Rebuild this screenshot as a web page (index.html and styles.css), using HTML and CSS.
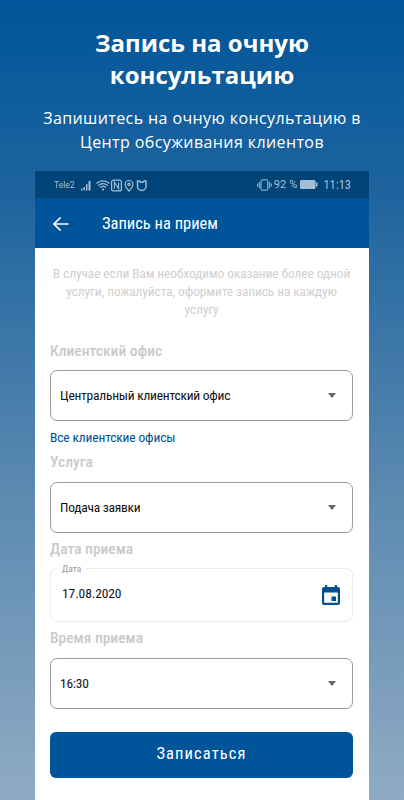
FILE: index.html
```html
<!DOCTYPE html>
<html lang="ru">
<head>
<meta charset="utf-8">
<title>Запись на очную консультацию</title>
<link rel="stylesheet" href="styles.css">
</head>
<body>
<main class="screen">
  <header class="promo">
    <h1 class="promo-title">Запись на очную<br>консультацию</h1>
    <p class="promo-sub">Запишитесь на очную консультацию в<br>Центр обсуживания клиентов</p>
  </header>
  <section class="phone">
    <div class="status">
      <span class="carrier">Tele2</span>
      <svg class="st-icon" width="66" height="14" viewBox="0 0 66 14" fill="none">
        <g fill="#a3bfd8">
          <rect x="0" y="10.500" width="1.500" height="2"/><rect x="2.500" y="9" width="1.500" height="3.500"/><rect x="5" y="6" width="1.500" height="6.500"/><rect x="7.500" y="3" width="2" height="9.500"/>
          <circle cx="22" cy="11.500" r="1.100"/>
        </g>
        <g stroke="#a3bfd8" stroke-width="1.200">
          <path d="M15.500 5.500a9.500 9.500 0 0 1 13 0M17.300 7.600a6.800 6.800 0 0 1 9.400 0M19.100 9.600a4 4 0 0 1 5.800 0"/>
          <rect x="30.600" y="2.100" width="9.800" height="10.800" rx="2"/>
          <path d="M33.400 10.800V4.200l4.200 6.600V4.200" stroke-width="1.100"/>
          <path d="M48 13c-2.600-2.900-3.900-4.800-3.900-6.600a3.900 3.900 0 0 1 7.800 0c0 1.800-1.300 3.700-3.900 6.600z"/>
          <circle cx="48" cy="6.400" r="1.200"/>
          <path d="M56.500 3h2l1 1.200h2.500l1-1.200h2v5.200a4.200 4.200 0 0 1-8.500 0z" stroke-width="1.400"/>
        </g>
      </svg>
      <span class="st-spacer"></span>
      <svg class="st-vibrate" width="15" height="12" viewBox="0 0 15 12" fill="none" stroke="#a3bfd8">
        <rect x="4" y=".8" width="6.800" height="10.400" rx="1"/>
        <path d="M2.300 3v6M.6 4.500v3M12.600 3v6M14.300 4.500v3"/>
      </svg>
      <span class="st-text">92 %</span>
      <svg class="st-battery" width="18" height="9" viewBox="0 0 18 9">
        <rect x="0" y="0" width="15.500" height="9" rx="1.500" fill="#a3bfd8"/>
        <rect x="16" y="2.500" width="1.500" height="4" fill="#a3bfd8"/>
      </svg>
      <span class="st-text st-time">11:13</span>
    </div>
    <div class="appbar">
      <svg class="back" width="18" height="16" viewBox="0 0 18 16" fill="none" stroke="#fff" stroke-width="1.700">
        <path d="M16.500 8H2M8.500 1.500 2 8l6.500 6.500"/>
      </svg>
      <span class="appbar-title">Запись на прием</span>
    </div>
    <form class="form">
      <p class="note">В случае если Вам необходимо оказание более одной услуги, пожалуйста, оформите запись на каждую услугу</p>

      <div class="label label-office">Клиентский офис</div>
      <div class="select">
        <span>Центральный клиентский офис</span>
        <i class="caret"></i>
      </div>
      <a class="link">Все клиентские офисы</a>

      <div class="label label-service">Услуга</div>
      <div class="select">
        <span>Подача заявки</span>
        <i class="caret"></i>
      </div>

      <div class="label label-date">Дата приема</div>
      <div class="date">
        <span class="date-legend">Дата</span>
        <span class="date-value">17.08.2020</span>
        <svg class="cal" width="18" height="20" viewBox="0 0 18 20">
          <path fill="#004f8f" d="M3 0h2.200v2h7.600V0H15v2h1a2 2 0 0 1 2 2v14a2 2 0 0 1-2 2H2a2 2 0 0 1-2-2V4a2 2 0 0 1 2-2h1zM2.200 7.500v10.300h13.600V7.500z"/>
          <rect fill="#004f8f" x="9.500" y="11.500" width="4.500" height="4.500"/>
        </svg>
      </div>

      <div class="label label-time">Время приема</div>
      <div class="select">
        <span>16:30</span>
        <i class="caret"></i>
      </div>

      <button class="submit" type="button">Записаться</button>
    </form>
  </section>
</main>
</body>
</html>
```

FILE: styles.css
```css
* { box-sizing: border-box; }
html, body { margin: 0; height: 100%; }
body { overflow: hidden; background: #fff; }
.screen {
  width: 404px;
  height: 800px;
  overflow: hidden;
  display: flex;
  flex-direction: column;
  align-items: center;
  background: linear-gradient(180deg, #00559a 0%, #1f659f 25%, #5c8ab1 62%, #8fabc4 100%);
  font-family: Roboto, sans-serif;
  font-stretch: 80%;
}
.promo {
  height: 171px;
  flex: none;
  padding-top: 27px;
  text-align: center;
  color: #fff;
  font-family: "Open Sans", sans-serif;
  font-stretch: normal;
}
.promo-title {
  margin: 0;
  font-size: 24px;
  line-height: 32px;
  font-weight: 700;
}
.promo-sub {
  margin: 15px 0 0;
  font-size: 16px;
  line-height: 24px;
  font-weight: 400;
  letter-spacing: .4px;
  white-space: nowrap;
}
.phone {
  width: 334px;
  height: 629px;
  flex: none;
  background: #fff;
  display: flex;
  flex-direction: column;
}
.status {
  height: 27px;
  flex: none;
  background: #004478;
  display: flex;
  align-items: center;
  padding: 0 18px 0 19px;
  color: #a3bfd8;
  font-stretch: normal;
}
.carrier { font-size: 8.500px; width: 27px; }
.st-spacer { flex: 1; }
.st-vibrate { margin-right: 2px; }
.st-text { font-size: 11px; letter-spacing: .1px; }
.st-battery { margin: 0 5px 0 3px; }
.st-time { font-size: 12.500px; font-stretch: 80%; letter-spacing: 0; }
.appbar {
  height: 50px;
  flex: none;
  background: #00559a;
  display: flex;
  align-items: center;
  padding: 1px 0 0 17px;
  color: #fff;
}
.appbar-title {
  margin-left: 32px;
  font-size: 16.500px;
}
.form {
  flex: 1;
  display: flex;
  flex-direction: column;
  padding: 0 16px 0 15px;
}
.note {
  margin: 16px 0 0;
  font-size: 13.500px;
  line-height: 18px;
  color: #d0d0d0;
  text-align: center;
  letter-spacing: -.12px;
}
.label {
  font-size: 15.500px;
  line-height: 20px;
  font-weight: 500;
  color: #c9c9c9;
}
.label-office { margin-top: 23px; }
.label-service { margin-top: 6px; }
.label-date { margin-top: 6px; }
.label-time { margin-top: 6px; }
.select {
  height: 51px;
  flex: none;
  margin-top: 10px;
  border: 1px solid #9a9a9a;
  border-radius: 7px;
  display: flex;
  align-items: center;
  justify-content: space-between;
  padding: 0 16px 2px 9px;
  font-size: 13.500px;
  color: #111;
  letter-spacing: -.24px;
}
.label-office + .select { margin-top: 9px; }
.caret {
  width: 0;
  height: 0;
  border-left: 4.500px solid transparent;
  border-right: 4.500px solid transparent;
  border-top: 5px solid #666;
  margin-top: 2px;
}
.link {
  margin-top: 7px;
  font-size: 13.500px;
  line-height: 18px;
  color: #004f8f;
  letter-spacing: -.15px;
}
.date {
  position: relative;
  height: 54px;
  flex: none;
  margin-top: 9px;
  border: 1px solid #ececec;
  border-radius: 7px;
  display: flex;
  align-items: center;
  justify-content: space-between;
  padding: 0 12px 0 11px;
}
.date-legend {
  position: absolute;
  left: 6px;
  top: -6px;
  padding: 0 5px;
  background: #fff;
  font-size: 9.500px;
  line-height: 12px;
  color: #999;
}
.date-value {
  font-size: 13.500px;
  color: #111;
  letter-spacing: -.1px;
  margin-top: -4px;
}
.submit {
  height: 46px;
  flex: none;
  margin-top: 23px;
  padding: 0 0 3px;
  border: 0;
  border-radius: 6px;
  background: #00559a;
  color: #fff;
  font-family: Roboto, sans-serif;
  font-stretch: 80%;
  font-size: 16.500px;
  letter-spacing: 1.100px;
}
```
